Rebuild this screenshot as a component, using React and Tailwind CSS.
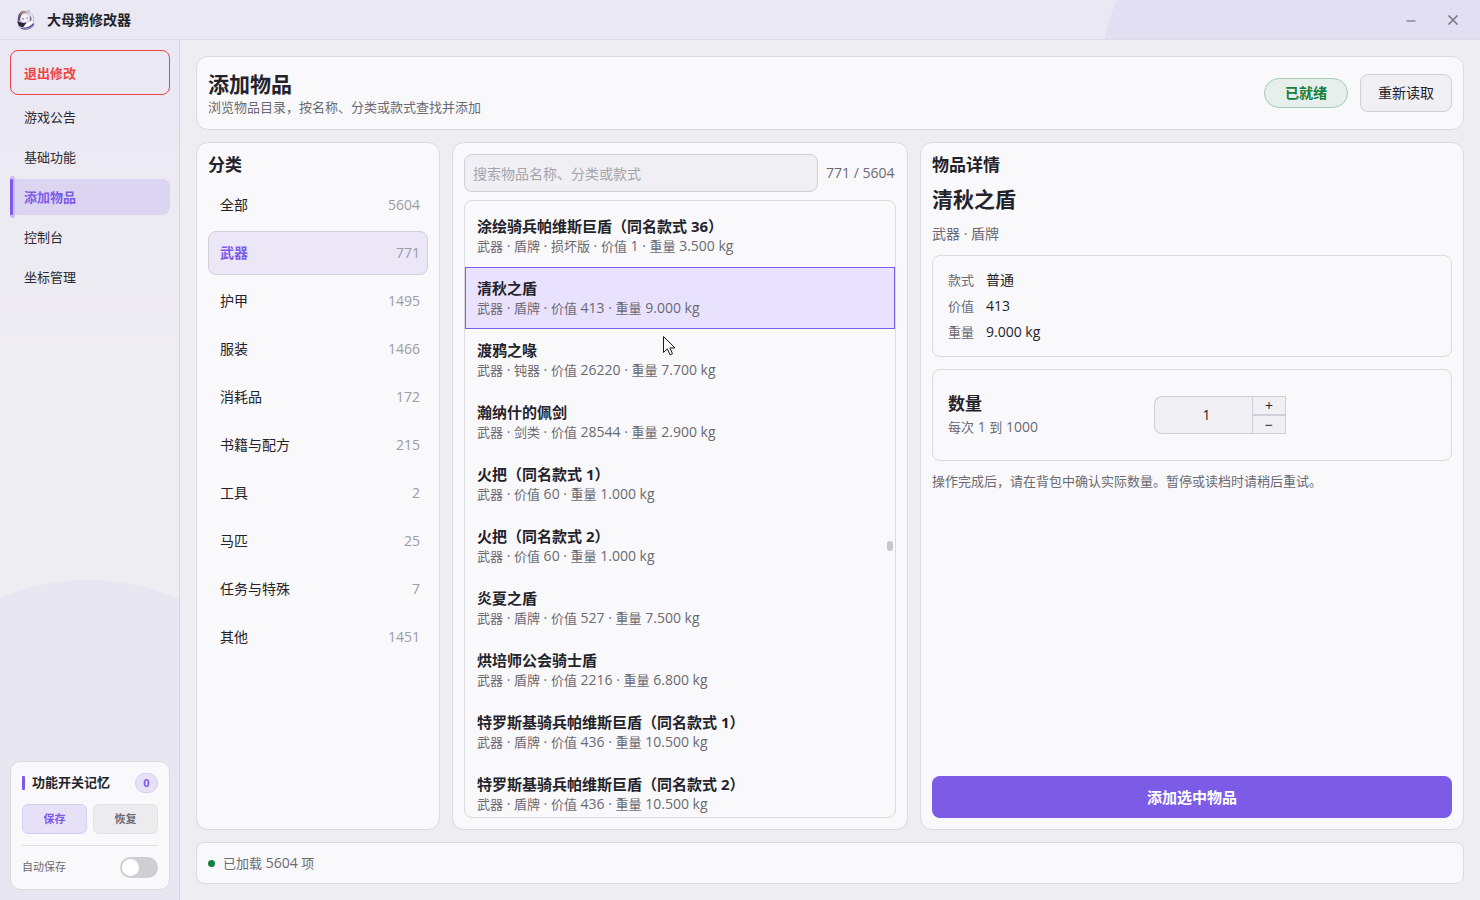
import React, { useState } from 'react';

const navItems = [
  { id: 'notice', label: '游戏公告' },
  { id: 'basic', label: '基础功能' },
  { id: 'items', label: '添加物品' },
  { id: 'console', label: '控制台' },
  { id: 'coords', label: '坐标管理' },
];

const categories = [
  { name: '全部', count: 5604 },
  { name: '武器', count: 771 },
  { name: '护甲', count: 1495 },
  { name: '服装', count: 1466 },
  { name: '消耗品', count: 172 },
  { name: '书籍与配方', count: 215 },
  { name: '工具', count: 2 },
  { name: '马匹', count: 25 },
  { name: '任务与特殊', count: 7 },
  { name: '其他', count: 1451 },
];

const items = [
  { name: '涂绘骑兵帕维斯巨盾（同名款式 36）', meta: '武器 · 盾牌 · 损坏版 · 价值 1 · 重量 3.500 kg' },
  { name: '清秋之盾', meta: '武器 · 盾牌 · 价值 413 · 重量 9.000 kg' },
  { name: '渡鸦之喙', meta: '武器 · 钝器 · 价值 26220 · 重量 7.700 kg' },
  { name: '瀚纳什的佩剑', meta: '武器 · 剑类 · 价值 28544 · 重量 2.900 kg' },
  { name: '火把（同名款式 1）', meta: '武器 · 价值 60 · 重量 1.000 kg' },
  { name: '火把（同名款式 2）', meta: '武器 · 价值 60 · 重量 1.000 kg' },
  { name: '炎夏之盾', meta: '武器 · 盾牌 · 价值 527 · 重量 7.500 kg' },
  { name: '烘培师公会骑士盾', meta: '武器 · 盾牌 · 价值 2216 · 重量 6.800 kg' },
  { name: '特罗斯基骑兵帕维斯巨盾（同名款式 1）', meta: '武器 · 盾牌 · 价值 436 · 重量 10.500 kg' },
  { name: '特罗斯基骑兵帕维斯巨盾（同名款式 2）', meta: '武器 · 盾牌 · 价值 436 · 重量 10.500 kg' },
];

const details = [
  { label: '款式', value: '普通' },
  { label: '价值', value: '413' },
  { label: '重量', value: '9.000 kg' },
];

// Latin runs look small beside 13px Chinese text, so they are set one size up
function MixedText({ text }) {
  return text.split(/([^\u4e00-\u9fff]+)/).map((part, i) =>
    i % 2 === 1 ? (
      <span key={i} className="text-[14px]">
        {part}
      </span>
    ) : (
      part
    )
  );
}

function Logo() {
  return (
    <svg width="20" height="22" viewBox="0 0 20 22" aria-hidden="true" className="relative">
      <path d="M2.500 7C3 3 7 1.500 10 2.500L13.500 0.500L14.500 4C18 6 19 9 17.500 12.500L18.500 15.500C17 19 12 21.500 7 20.500C3 20 1.500 17.500 2 15C0.500 12.500 1 9.500 2.500 7Z" fill="#c3bfd8" />
      <path d="M2 8C2.500 3.500 6 1.500 9.500 2.500C7 3.500 5 5.500 4.500 8.500L3.500 12.500C1.500 12 1.500 10 2 8Z" fill="#5f5774" />
      <path d="M4 6C5.500 3.500 8 2.500 10.500 3.200" fill="none" stroke="#b98a6a" strokeWidth="1.2" />
      <path d="M5 7.500C6.500 4.500 10 4 12.500 6C14.500 9 13.500 12.500 9.500 13.500C5.500 13.500 3.800 11 5 7.500Z" fill="#f6eef5" />
      <path d="M12 3.500C15 4.500 17.500 7.500 17 10.500C16.500 13 15 13 14.500 11.500C14.500 8 13.500 5.500 12 3.500Z" fill="#efedf7" />
      <path d="M14 6.500C16 8.500 16 11 14.500 12.500C13.500 11 14.500 9 14 6.500Z" fill="#6a6287" />
      <path d="M1.500 12C4 13.500 7 14.500 10.500 13.500L7.500 18C4 18.500 1.500 16 1.500 12Z" fill="#2a2444" />
      <path d="M7.500 18L11 13.500L15.500 12L17.500 13C15.500 16 11.500 18.500 7.500 18Z" fill="#fff" />
      <path d="M4.500 19C9.500 19.500 14.500 17.500 18 14C18.500 17 15 20 11 20.500C8.500 21 6 20.500 4.500 19Z" fill="#5a4c8c" />
      <path d="M7 20C11 20.500 14.500 19 17 17" fill="none" stroke="#b9a9e0" strokeWidth="0.800" />
      <path d="M6.300 9.800H8M10.500 9H12" stroke="#6d5a82" />
    </svg>
  );
}

function TitleBar() {
  return (
    <header className="relative flex h-10 shrink-0 items-center overflow-hidden border-b border-[#dddbe8] bg-[#eae8f3] pr-1.5 pl-4">
      <div className="absolute -top-32 -right-10 size-[420px] rounded-full bg-[#e2dff2]" />
      <Logo />
      <h1 className="relative ml-[11px] flex-1 text-sm font-bold">大母鹅修改器</h1>
      <button aria-label="最小化" className="relative flex h-8 w-[42px] items-center justify-center text-[#77757f]">
        <svg width="10" height="10" viewBox="0 0 10 10" stroke="currentColor" strokeWidth="1.2">
          <path d="M0.500 6H9.500" />
        </svg>
      </button>
      <button aria-label="关闭" className="relative flex h-8 w-[42px] items-center justify-center text-[#77757f]">
        <svg width="10" height="10" viewBox="0 0 10 10" stroke="currentColor" strokeWidth="1.5">
          <path d="M0.500 0.500L9.500 9.500M9.500 0.500L0.500 9.500" />
        </svg>
      </button>
    </header>
  );
}

function MemoryCard() {
  return (
    <section className="relative rounded-[10px] border border-[#dadadf] bg-[#f9f9fb] px-[11px] pt-[11px] pb-[11px]">
      <div className="flex h-5 items-center">
        <span className="h-3.5 w-[3px] rounded-[1px] bg-[#7c5ce6]" />
        <h2 className="ml-[7px] flex-1 text-[13px] font-bold">功能开关记忆</h2>
        <span className="flex h-5 w-[23px] items-center justify-center rounded-full border border-[#d6cdf3] bg-[#e7e1f8] text-[11px] font-bold text-[#7c5ce6]">
          0
        </span>
      </div>
      <div className="mt-[11px] grid grid-cols-2 gap-1.5 text-[11px] font-bold">
        <button className="h-[30px] rounded-md border border-[#d6cdf3] bg-[#e7e1f8] text-[#7c5ce6]">保存</button>
        <button className="h-[30px] rounded-md border border-[#e2e2e4] bg-[#ececee] text-[#6b6a73]">恢复</button>
      </div>
      <label className="mt-[11px] flex items-center justify-between border-t border-[#dfdfe3] pt-[11px] text-[11px] text-[#6b6a73]">
        自动保存
        <input
          type="checkbox"
          role="switch"
          className="h-[21px] w-[38px] appearance-none rounded-full bg-[#cfced3] p-0.5 before:block before:size-[17px] before:rounded-full before:bg-white checked:bg-[#7c5ce6] checked:before:ml-auto"
        />
      </label>
    </section>
  );
}

function Sidebar() {
  const [page, setPage] = useState('items');

  return (
    <aside className="relative flex w-[180px] shrink-0 flex-col overflow-hidden border-r border-[#d6d5dd] bg-linear-to-b from-[#eae8f4] to-[#eeedf1] to-40% py-2.5 pr-[9px] pl-2.5">
      <div className="absolute -bottom-32 -left-[136px] size-[448px] rounded-full bg-[#e8e6f1]" />
      <button className="relative h-[45px] rounded-lg border border-[#ef4444] px-[13px] pt-0.5 text-left text-[13px] font-bold text-[#ef4444]">
        退出修改
      </button>
      <nav className="relative mt-1 flex flex-1 flex-col gap-1">
        {navItems.map((item) => {
          const isActive = page === item.id;
          return (
            <button
              key={item.id}
              onClick={() => setPage(item.id)}
              className={`relative h-9 rounded-lg px-3.5 pt-0.5 text-left text-[13px] ${
                isActive ? 'bg-[#dcd5f2] font-bold text-[#7c5ce6]' : 'text-[#2b2a33]'
              }`}
            >
              {isActive && (
                <>
                  <span className="absolute -inset-y-[3px] left-0 w-[5px] rounded-sm bg-[#c8bdee]" />
                  <span className="absolute inset-y-0 left-0 w-[3px] rounded-[1px] bg-[#7c5ce6]" />
                </>
              )}
              {item.label}
            </button>
          );
        })}
      </nav>
      <MemoryCard />
    </aside>
  );
}

function PageHeader() {
  return (
    <section className="flex h-[74px] shrink-0 items-center gap-3 rounded-xl border border-[#dadadf] bg-[#f9f9fb] px-[11px]">
      <div className="flex-1">
        <h2 className="text-[21px] leading-7 font-semibold">添加物品</h2>
        <p className="text-[13px] leading-[18px] text-[#6b6a73]">浏览物品目录，按名称、分类或款式查找并添加</p>
      </div>
      <span className="flex h-[30px] w-[84px] items-center justify-center rounded-full border border-[#a3ccb3] bg-[#e6efeb] text-sm font-bold text-[#15803d]">
        已就绪
      </span>
      <button className="h-[38px] w-[92px] rounded-lg border border-[#d0cfd5] bg-[#f0eff4] text-sm">重新读取</button>
    </section>
  );
}

function CategoryPanel() {
  const [selected, setSelected] = useState('武器');

  return (
    <section className="min-h-0 overflow-hidden rounded-xl border border-[#dadadf] bg-[#f9f9fb] p-[11px]">
      <h3 className="text-[17px] leading-[21px] font-semibold">分类</h3>
      <div className="mt-2 flex flex-col gap-1">
        {categories.map((cat) => {
          const isActive = selected === cat.name;
          return (
            <button
              key={cat.name}
              onClick={() => setSelected(cat.name)}
              className={`flex h-11 items-center justify-between rounded-lg border pr-[7px] pl-[11px] text-sm ${
                isActive ? 'border-[#d0cfd8] bg-[#ebe7f7]' : 'border-transparent'
              }`}
            >
              <span className={isActive ? 'font-bold text-[#7c5ce6]' : ''}>{cat.name}</span>
              <span className="text-[#9c9ba5]">{cat.count}</span>
            </button>
          );
        })}
      </div>
    </section>
  );
}

function ItemList() {
  const [selected, setSelected] = useState(1);

  return (
    <section className="flex min-h-0 flex-col gap-2 rounded-xl border border-[#dadadf] bg-[#f9f9fb] p-[11px]">
      <div className="flex items-center gap-2 text-sm">
        <input
          type="text"
          aria-label="搜索物品"
          placeholder="搜索物品名称、分类或款式"
          className="h-[38px] min-w-0 flex-1 rounded-lg border border-[#d0cfd5] bg-[#f0eff4] px-2 outline-none placeholder:text-[#a5a4ac]"
        />
        <span className="min-w-[70px] text-[#6b6a73]">771 / 5604</span>
      </div>
      <div className="relative min-h-0 flex-1 overflow-hidden rounded-lg border border-[#dadadf] pt-1">
        {items.map((item, i) => (
          <button
            key={item.name}
            onClick={() => setSelected(i)}
            className={`block h-[62px] w-full border px-[11px] text-left ${
              selected === i ? 'border-[#7c5ce6] bg-[#e9e2ff]' : 'border-transparent'
            }`}
          >
            <span className="block text-[15px] leading-5 font-bold">{item.name}</span>
            <span className="block h-5 text-[13px] leading-5 text-[#6b6a73]">
              <MixedText text={item.meta} />
            </span>
          </button>
        ))}
        <span className="absolute top-[340px] right-0.5 h-2.5 w-1.5 rounded-full bg-[#c8c7cd]" />
        {/* mouse pointer */}
        <svg className="absolute top-[135px] left-[198px]" width="13" height="20" viewBox="0 0 13 20">
          <path
            d="M0.500 0.500V16.500L4.300 12.900L7 18.800L9.500 17.700L6.900 11.900H12Z"
            fill="#fff"
            stroke="#1c1b22"
          />
        </svg>
      </div>
    </section>
  );
}

function QuantityCard() {
  const [quantity, setQuantity] = useState(1);
  const change = (n) => setQuantity(Math.min(1000, Math.max(1, n)));

  return (
    <div className="mt-3 flex h-[92px] items-center rounded-lg border border-[#dadadf] px-[15px]">
      <label htmlFor="quantity" className="w-[206px]">
        <span className="block text-[17px] leading-6 font-semibold">数量</span>
        <span className="block text-[13px] leading-[22px] text-[#6b6a73]">
          <MixedText text="每次 1 到 1000" />
        </span>
      </label>
      <input
        id="quantity"
        type="text"
        value={quantity}
        onChange={(e) => change(Number(e.target.value) || 1)}
        className="h-[38px] w-[98px] rounded-l-lg border border-r-0 border-[#d0cfd5] bg-[#f0eff4] pb-0.5 pl-1.5 text-center text-sm outline-none"
      />
      <div className="flex w-[34px] flex-col text-sm leading-4">
        <button aria-label="增加" onClick={() => change(quantity + 1)} className="h-[19px] border border-[#d0cfd5] bg-[#f0eff4]">
          +
        </button>
        <button aria-label="减少" onClick={() => change(quantity - 1)} className="h-[19px] border border-[#d0cfd5] bg-[#f0eff4]">
          −
        </button>
      </div>
    </div>
  );
}

function DetailPanel() {
  return (
    <section className="flex min-h-0 flex-col rounded-xl border border-[#dadadf] bg-[#f9f9fb] p-[11px]">
      <h3 className="text-[17px] leading-[21px] font-semibold">物品详情</h3>
      <h2 className="mt-2.5 text-[21px] leading-7 font-semibold">清秋之盾</h2>
      <p className="mt-[11px] text-sm text-[#6b6a73]">武器 · 盾牌</p>
      <dl className="mt-[11px] flex h-[102px] flex-col justify-center rounded-lg border border-[#dadadf] px-[15px]">
        {details.map((row) => (
          <div key={row.label} className="flex items-center gap-3 leading-[26px]">
            <dt className="text-[13px] leading-[26px] text-[#6b6a73]">{row.label}</dt>
            <dd className="text-[14px] leading-[26px]">{row.value}</dd>
          </div>
        ))}
      </dl>
      <QuantityCard />
      <p className="mt-2.5 flex-1 text-[13px] leading-5 text-[#6b6a73]">
        操作完成后，请在背包中确认实际数量。暂停或读档时请稍后重试。
      </p>
      <button className="h-[42px] shrink-0 rounded-lg bg-[#7c5ce6] text-[15px] font-semibold text-white">添加选中物品</button>
    </section>
  );
}

export default function App() {
  return (
    <div className="flex h-screen flex-col overflow-hidden bg-[#eeedf2] font-['Open_Sans','Noto_Sans_CJK_SC',sans-serif] text-[#24232b]">
      <TitleBar />
      <div className="flex min-h-0 flex-1">
        <Sidebar />
        <main className="flex min-w-0 flex-1 flex-col gap-3 p-4">
          <PageHeader />
          <div className="grid min-h-0 flex-1 grid-cols-[244px_456fr_544fr] grid-rows-1 gap-3">
            <CategoryPanel />
            <ItemList />
            <DetailPanel />
          </div>
          <footer className="flex h-[42px] shrink-0 items-center gap-2 rounded-lg border border-[#dadadf] bg-[#f9f9fb] px-[11px] text-[13px] text-[#6b6a73]">
            <span className="size-[7px] rounded-full bg-[#15803d]" />
            <p>
              <MixedText text="已加载 5604 项" />
            </p>
          </footer>
        </main>
      </div>
    </div>
  );
}
